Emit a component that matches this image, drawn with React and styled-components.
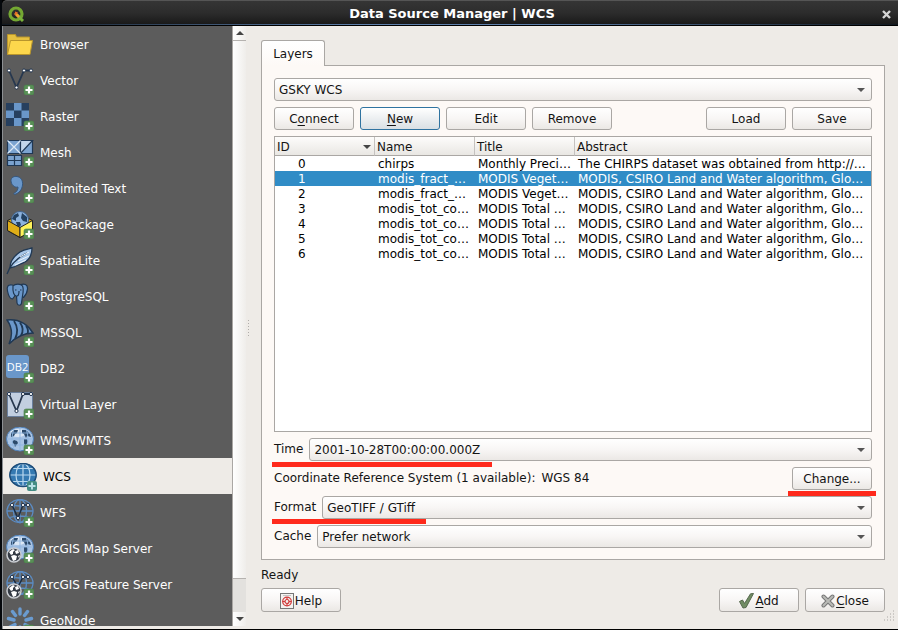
import React, { useState } from 'react';
import styled, { createGlobalStyle, css } from 'styled-components';

const GlobalStyle = createGlobalStyle`
  * { box-sizing: border-box; }
  body {
    margin: 0;
    background: #000;
    color: #141414;
    font: 12px/15px "DejaVu Sans", sans-serif;
  }
  button, select { font: inherit; color: inherit; margin: 0; }
`;

const Window = styled.div`
  height: 100vh;
  min-height: 400px;
  display: flex;
  flex-direction: column;
  overflow: hidden;
  border-left: 2px solid #05080c;
  border-bottom: 1px solid #000;
`;

const TitleBar = styled.header`
  flex: none;
  height: 26px;
  display: flex;
  align-items: center;
  padding: 2px 4px 0 6px;
  border-top: 1px solid #555;
  border-bottom: 1px solid #000;
  border-top-left-radius: 5px;
  background:
    linear-gradient(90deg, #101820, #5e80ac 40%, #5e80ac 60%, #101820) bottom / 100% 1px no-repeat,
    linear-gradient(#353535, #2c2c2c 50%, #181818);
`;

const Title = styled.h1`
  flex: 1;
  margin: 0;
  color: #fff;
  font-size: 13px;
  line-height: 20px;
  font-weight: bold;
  text-align: center;
`;

const TitleClose = styled.button`
  display: flex;
  padding: 3px;
  border: 0;
  background: none;
`;

const Body = styled.div`
  flex: 1;
  min-height: 0;
  display: flex;
  background: #eeebe7;
  border-left: 1px solid #8c9094;
`;

const Sidebar = styled.nav`
  flex: none;
  width: 243px;
  display: flex;
  margin-bottom: 3px;
`;

const SourceList = styled.div`
  flex: 1;
  overflow: hidden;
  background: #5c5c5c;
`;

const SourceItem = styled.button`
  width: 100%;
  height: 36px;
  display: flex;
  align-items: center;
  gap: 6px;
  border: 0;
  padding: 2px 3px 0;
  text-align: left;
  color: #fff;
  background: transparent;
  ${(p) => p.$active && css`
    padding-left: 6px;
    color: #000;
    background: #eeebe7;
  `}
`;

const SourceIcon = styled.svg`
  flex: none;
  width: 28px;
  height: 28px;
`;

const ScrollBar = styled.div`
  width: 14px;
  display: flex;
  flex-direction: column;
  border-left: 1px solid #aaa7a4;
  background: #e3e1de;
`;

const ScrollButton = styled.button`
  height: 14px;
  display: flex;
  align-items: center;
  justify-content: center;
  padding: 0;
  border: 0;
  background: linear-gradient(90deg, #fff, #efedea);
`;

const ScrollThumb = styled.div`
  flex: 1;
  margin-bottom: 33px;
  border: solid #b5b2af;
  border-width: 1px 0;
  background: linear-gradient(90deg, #fff, #efedea);
`;

const Splitter = styled.div`
  flex: none;
  width: 15px;
  display: flex;
  align-items: center;
  padding-left: 1px;
`;

const Main = styled.main`
  flex: 1;
  min-width: 0;
  display: flex;
  flex-direction: column;
  padding: 14px 13px 0 0;
`;

const Tab = styled.button`
  position: relative;
  align-self: flex-start;
  width: 64px;
  height: 26px;
  margin-bottom: -1px;
  padding: 2px 0 0;
  border: 1px solid #aaa7a4;
  border-bottom: 0;
  border-radius: 3px 3px 0 0;
  background: linear-gradient(#fff, #fdf9f6);
`;

const Panel = styled.section`
  flex: 1;
  min-height: 0;
  display: flex;
  flex-direction: column;
  gap: 6px;
  padding: 12px 12px 11px;
  border: 1px solid #aaa7a4;
  background: #fdf9f6;
`;

const Row = styled.div`
  flex: none;
  position: relative;
  display: flex;
  align-items: center;
  gap: 6px;
`;

const Spacer = styled.div`
  flex: 1;
`;

const raised = css`
  border: 1px solid #aaa7a4;
  border-radius: 3px;
  background: linear-gradient(#fff, #f8f6f5 50%, #ebe8e5);
`;

const Button = styled.button`
  ${raised}
  flex: none;
  width: 80px;
  height: ${(p) => (p.$tall ? 24 : 23)}px;
  display: flex;
  align-items: center;
  justify-content: center;
  gap: 1px;
  padding: 2px 0 0;
  ${(p) => p.$focused && css`
    border-color: #2f73a0;
    background: linear-gradient(#fff, #eceff1 50%, #d9e0e4);
  `}
`;

const Mnemonic = styled.span`
  text-decoration: underline;
  text-decoration-thickness: 1px;
  text-underline-offset: 2px;
  text-decoration-skip-ink: none;
`;

const ComboFrame = styled.span`
  flex: 1;
  position: relative;
  display: flex;
`;

const ComboSelect = styled.select`
  ${raised}
  appearance: none;
  width: 100%;
  height: 23px;
  padding: 2px 20px 0 4px;
`;

const ComboArrow = styled.svg`
  position: absolute;
  right: 7px;
  top: 10px;
  pointer-events: none;
`;

const Marker = styled.span`
  position: absolute;
  z-index: 1;
  top: ${(p) => p.$top}px;
  left: ${(p) => (p.$end ? 'auto' : '-2px')};
  right: ${(p) => (p.$end ? '-4px' : 'auto')};
  width: ${(p) => p.$width}px;
  height: 5px;
  background: #ff2a1c;
`;

const TreeBox = styled.div`
  flex: 1;
  min-height: 0;
  overflow: hidden;
  border: 1px solid #aaa7a4;
  background: #fff;
`;

const Tree = styled.table`
  width: 100%;
  table-layout: fixed;
  border-collapse: separate;
  border-spacing: 0;
`;

const HeadCell = styled.th`
  width: ${(p) => (p.$wide ? 'auto' : '100px')};
  height: 19px;
  padding: 2px 3px 0 2px;
  border-right: ${(p) => (p.$wide ? '0' : '1px solid #c5c2bf')};
  border-bottom: 1px solid #aaa7a4;
  background: linear-gradient(#fdfcfb, #e9e7e3);
  text-align: left;
  font-weight: normal;
`;

const HeadInner = styled.div`
  display: flex;
  align-items: center;
  justify-content: space-between;
`;

const TreeRow = styled.tr`
  color: ${(p) => (p.$selected ? '#fff' : '#000')};
  background: ${(p) => (p.$selected ? '#308cc6' : '#fff')};
`;

const Cell = styled.td`
  height: 15px;
  line-height: 13px;
  padding: 2px 3px 0 ${(p) => (p.$id ? 23 : 3)}px;
  overflow: hidden;
  white-space: nowrap;
  text-overflow: ellipsis;
`;

const Status = styled.div`
  flex: none;
  margin: 8px 0 5px;
`;

const Footer = styled.footer`
  flex: none;
  position: relative;
  display: flex;
  gap: 6px;
  padding-bottom: 17px;
`;

const Grip = styled.svg`
  position: absolute;
  right: -10px;
  bottom: 7px;
`;

const Triangle = ({ up }) => (
  <svg width="8" height="4" viewBox="0 0 8 4" aria-hidden="true">
    <path d={up ? 'M0 4L4 0L8 4Z' : 'M0 0H8L4 4Z'} fill="#444" />
  </svg>
);

const Plus = () => (
  <g>
    <rect x="18" y="18" width="10" height="10" rx="2" fill="#589056" stroke="#4a7d49" strokeWidth=".6" />
    <path d="M23 19.5v7M19.5 23h7" stroke="#fff" strokeWidth="2.2" />
  </g>
);

const GridLines = ({ stroke = '#5b8cc4' }) => (
  <g fill="none" stroke={stroke} strokeWidth="1.3">
    <ellipse cx="14" cy="12" rx="13" ry="11.5" />
    <ellipse cx="14" cy="12" rx="6.5" ry="11.5" />
    <path d="M14 .5v23M1 12h26M3.5 5.5q10.500 3 21 0M3.500 18.500q10.500-3 21 0" />
  </g>
);

const Continents = () => (
  <path
    d="M5 6l3-3 4 0-1 3-2 1-1 2-3 1zM8 13l3 1 1 2-3 4-1-3-2-2zM16 3l4 0 4 4 1 3-4-1-1 2-2-4-2-1zM18 12l3 0 1 3-3 4-1-3z"
    fill="#2c4a6b"
  />
);

const Globe = () => (
  <g>
    <ellipse cx="14" cy="12" rx="13.500" ry="12" fill="#a9c4e4" stroke="#4f80b8" />
    <ellipse cx="12" cy="6" rx="8" ry="4" fill="#dce8f5" />
    <Continents />
    <path d="M14 .5v23M1 12h26M3.500 6h21M3.500 18h21M8 2q-4 10 0 20M20 2q4 10 0 20" fill="none" stroke="#8fb6e0" strokeWidth=".9" />
  </g>
);

const ArcBadge = () => (
  <g>
    <circle cx="8" cy="20" r="7" fill="#333a44" stroke="#c9ccd1" strokeWidth="1.500" />
    <path d="M3 17l4-3 2 1-2 2 0 2-2 1zM9 16l3-1 1 3-3 1zM5 21l3-1 3 1-1 4-3 1zM12 21l2-1-1 3z" fill="#fff" />
  </g>
);

const Nodes = ({ points, fill = '#fff' }) =>
  points.map(([x, y]) => (
    <circle key={`${x}-${y}`} cx={x} cy={y} r="1.600" fill={fill} stroke="#24364f" strokeWidth="1" />
  ));

const drawings = {
  browser: (
    <g stroke="#b8952c" strokeLinejoin="round">
      <path d="M1.500 23V3.500h8l1 2.500h13V22z" fill="#e6c040" />
      <path d="M1.500 23.500L4.500 9.500h22L24 23.500z" fill="#fdd74c" />
    </g>
  ),
  vector: (
    <g>
      <path d="M3 3.500l7.500 17L18 3.500h7" fill="none" stroke="#27384f" strokeWidth="1.800" />
      <Nodes points={[[3, 3.5], [10.5, 20.5], [18, 3.5], [25, 3.5]]} />
      <Plus />
    </g>
  ),
  raster: (
    <g>
      <path d="M0 0h23v23H0z" fill="#27405f" />
      <path d="M8 0h7.500v7.500H8zM0 7.500h8V15H0zM15.500 7.500H23V15h-7.500zM8 15h7.500v8H8z" fill="#6a97ca" />
      <Plus />
    </g>
  ),
  mesh: (
    <g>
      <g stroke="#1f3855" strokeWidth="1.200">
        <path d="M1.500 1.500h13v13h-13zM14.500 1.500h12v13h-12zM1.500 16.500h7v5h-7zM8.500 16.500h7v5h-7zM1.500 21.500h7v5h-7zM8.500 21.500h7v5h-7z" fill="#7ba3d0" />
        <path d="M14.500 14.500v-13h12z" fill="#c3d6eb" />
        <path d="M1.500 1.500l13 13M14.500 1.500l-13 13" stroke="#dce8f5" />
      </g>
      <Plus />
    </g>
  ),
  comma: (
    <g>
      <path d="M5 5.500c0-3 3-4.500 6-4 4 .8 6 4 5.500 8.500-.5 4.500-3 8-8 9.500l-.8-1c3-1.500 4.500-4 4.300-6.500-3.500 1-7-2.500-7-6.500z" fill="#6a97ca" stroke="#35577e" />
      <Plus />
    </g>
  ),
  geopackage: (
    <g>
      <path d="M1.500 9.500l12.500-6 12.500 6v10L14 26.500l-12.500-7z" fill="#d9a514" stroke="#222" />
      <circle cx="14" cy="9" r="8.500" fill="#8db3de" stroke="#40638d" />
      <path d="M8 4l4-2 1 3-3 2 0 3-4-2zM16 2l5 4 0 5-4-1-2-3zM10 11l4 0 1 3-3 3z" fill="#23405f" />
      <path d="M1.500 9.500L14 16.500v10l-12.500-7z" fill="#dfae18" stroke="#222" strokeLinejoin="round" />
      <path d="M26.500 9.500L14 16.500v10l12.500-7z" fill="#fff35a" stroke="#222" strokeLinejoin="round" />
      <Plus />
    </g>
  ),
  feather: (
    <g>
      <path d="M4 21c0-6 4-12 10-16 4-2.500 8-3 12-4 0 6-2 11-7 14-4 2-7 3-11 5z" fill="#a9c8ea" stroke="#203853" strokeWidth="1.300" />
      <path d="M1 27c3-9 10-16 20-21" fill="none" stroke="#203853" strokeWidth="1.300" />
      <path d="M9 18l11-5M12 14l11-5M14 10l9-5" stroke="#e9f2fb" />
      <Plus />
    </g>
  ),
  elephant: (
    <g>
      <g fill="#6a97ca" stroke="#203853" strokeWidth="1.200" strokeLinejoin="round">
        <path d="M6 2C2 1 .500 4 1.500 8c.8 4 2.500 8 5 8l3-4V3z" />
        <path d="M14 2c4-2 8-.500 7.500 4-.4 4-2.500 7-4 8.500l-3-2z" />
        <path d="M7 3c2-2.500 8-2.500 9.500 0 1.500 3 .500 7 0 10l-1 7c-.4 3-4 3-4.500 0l-.500-7C8 13 6.500 9 7 3z" />
        <path d="M9 7h1.500M14 7h1.500M11 13c2 0 2-3 2-5" fill="none" />
      </g>
      <Plus />
    </g>
  ),
  mssql: (
    <g>
      <path d="M1 1c9-1 19 2 26 13-9 0-16 3-24 11C7 16 6 8 1 1z" fill="#6a97ca" stroke="#203853" strokeWidth="1.400" />
      <path d="M8 2c4 6 4 12 1 18M14 3.500c3.500 5 3.500 9 1 13M20 7c2.500 3 2.500 5 1.500 8" fill="none" stroke="#203853" strokeWidth="1.800" />
      <Plus />
    </g>
  ),
  db2: (
    <g>
      <rect width="23" height="23" rx="3" fill="#6a97ca" />
      <text x="11.500" y="16" textAnchor="middle" fontSize="11" fontFamily="Open Sans, sans-serif" fill="#fff">DB2</text>
      <Plus />
    </g>
  ),
  virtual: (
    <g>
      <path d="M1.500 1.500h25v24h-25z" fill="#c2cfe0" stroke="#6a7f9c" />
      <path d="M3 3l7.500 17L17 3h8" fill="none" stroke="#27384f" strokeWidth="1.800" />
      <Nodes points={[[3, 3], [10.5, 20], [17, 3], [25, 3]]} />
      <Plus />
    </g>
  ),
  wms: <g><Globe /><Plus /></g>,
  wcs: (
    <g>
      <ellipse cx="14" cy="12" rx="13.500" ry="12" fill="#3579b1" />
      <g fill="none" stroke="#b9d8ef" strokeWidth="1.200">
        <ellipse cx="14" cy="12" rx="7" ry="11.500" />
        <path d="M14 .5v23M1 12h26M4 5.500h20M4 18.500h20" />
      </g>
      <ellipse cx="14" cy="12" rx="13.200" ry="11.500" fill="none" stroke="#1f4d79" strokeWidth="1.500" />
      <rect x="18" y="18" width="10" height="10" rx="2" fill="#448c83" />
      <path d="M23 19.500v7M19.500 23h7" stroke="#b8e0e6" strokeWidth="2" />
    </g>
  ),
  wfs: (
    <g>
      <GridLines />
      <path d="M6 6l6 13L17 6h5" fill="none" stroke="#1d2d42" strokeWidth="1.500" />
      <Nodes points={[[6, 6], [12, 19], [17, 6], [22, 6]]} />
      <Plus />
    </g>
  ),
  arcmap: <g><Globe /><ArcBadge /><Plus /></g>,
  arcfeature: (
    <g>
      <GridLines />
      <path d="M6 6l6 10L17 6h5" fill="none" stroke="#1d2d42" strokeWidth="1.500" />
      <Nodes points={[[6, 6], [17, 6], [22, 6]]} />
      <ArcBadge />
      <Plus />
    </g>
  ),
  geonode: (
    <g>
      <path d="M14 2v5M14 20v5M2.500 11.500l5.500 1.500M25.500 11.500L20 13M6.500 4.500l3 4M21.500 4.500l-3 4M4 20l5-2.500M24 20l-5-2.500" stroke="#6a9bd0" strokeWidth="3.400" strokeLinecap="round" />
      <Plus />
    </g>
  ),
};

const sources = [
  ['browser', 'Browser'],
  ['vector', 'Vector'],
  ['raster', 'Raster'],
  ['mesh', 'Mesh'],
  ['comma', 'Delimited Text'],
  ['geopackage', 'GeoPackage'],
  ['feather', 'SpatiaLite'],
  ['elephant', 'PostgreSQL'],
  ['mssql', 'MSSQL'],
  ['db2', 'DB2'],
  ['virtual', 'Virtual Layer'],
  ['wms', 'WMS/WMTS'],
  ['wcs', 'WCS'],
  ['wfs', 'WFS'],
  ['arcmap', 'ArcGIS Map Server'],
  ['arcfeature', 'ArcGIS Feature Server'],
  ['geonode', 'GeoNode'],
];

const modis = 'MODIS, CSIRO Land and Water algorithm, Global';
const layers = [
  ['chirps', 'Monthly Precipitation', 'The CHIRPS dataset was obtained from http://chg'],
  ['modis_fract_cover', 'MODIS Vegetation', modis],
  ['modis_fract_cover', 'MODIS Vegetation', modis],
  ['modis_tot_cover', 'MODIS Total Cover', modis],
  ['modis_tot_cover', 'MODIS Total Cover', modis],
  ['modis_tot_cover', 'MODIS Total Cover', modis],
  ['modis_tot_cover', 'MODIS Total Cover', modis],
];

function Combo({ id, value, label }) {
  return (
    <ComboFrame>
      <ComboSelect id={id} aria-label={label} defaultValue={value}>
        <option>{value}</option>
      </ComboSelect>
      <ComboArrow width="8" height="4" viewBox="0 0 8 4" aria-hidden="true">
        <path d="M0 0H8L4 4Z" fill="#555" />
      </ComboArrow>
    </ComboFrame>
  );
}

const QgisLogo = () => (
  <svg width="17" height="16" viewBox="0 0 17 16" aria-hidden="true">
    <circle cx="8" cy="8" r="6" fill="none" stroke="#74a832" strokeWidth="3.200" />
    <path d="M8.500 8.500l6.500 6.500" stroke="#79b23a" strokeWidth="3" />
    <path d="M7 7l4 4" stroke="#f0a030" strokeWidth="2.600" />
    <path d="M7 5.500l3 1-3 3z" fill="#e66a24" />
  </svg>
);

const HelpIcon = () => (
  <svg width="14" height="16" viewBox="0 0 14 16" aria-hidden="true">
    <rect x=".5" y=".5" width="13" height="15" fill="#f4f3f1" stroke="#777" />
    <path d="M3 2.500h8" stroke="#c4c4c4" />
    <circle cx="7" cy="8.500" r="4.300" fill="none" stroke="#d23a3a" strokeWidth="1.200" />
    <circle cx="7" cy="8.500" r="2" fill="none" stroke="#d23a3a" strokeWidth="1.200" />
    <path d="M7 4v2.500M7 10.500V13M2.500 8.500H5M9 8.500h2.500" stroke="#d23a3a" strokeWidth="1.200" />
  </svg>
);

const CheckIcon = () => (
  <svg width="15" height="16" viewBox="0 0 15 16" aria-hidden="true">
    <path d="M.5 8.500l3-1.500 2 3.500L11.500.800l3-.3L7 14.500l-3 .5z" fill="#718d64" stroke="#56694d" strokeLinejoin="round" />
  </svg>
);

const CrossIcon = () => (
  <svg width="14" height="14" viewBox="0 0 14 14" aria-hidden="true">
    <path d="M2.500 2.500l9 9M11.500 2.500l-9 9" stroke="#777" strokeWidth="4" strokeLinecap="round" />
    <path d="M2.500 2.500l9 9M11.500 2.500l-9 9" stroke="#b9bab6" strokeWidth="2" strokeLinecap="round" />
  </svg>
);

export default function App() {
  const [active, setActive] = useState('wcs');
  const [selected, setSelected] = useState(1);

  return (
    <>
      <GlobalStyle />
      <Window>
        <TitleBar>
          <QgisLogo />
          <Title>Data Source Manager | WCS</Title>
          <TitleClose aria-label="Close window">
            <svg width="9" height="9" viewBox="0 0 9 9">
              <path d="M1 1l7 7M8 1L1 8" stroke="#d5d5d5" strokeWidth="2.400" />
            </svg>
          </TitleClose>
        </TitleBar>
        <Body>
          <Sidebar>
            <SourceList>
              {sources.map(([key, name]) => (
                <SourceItem key={key} $active={active === key} onClick={() => setActive(key)}>
                  <SourceIcon viewBox="0 0 28 28" aria-hidden="true">{drawings[key]}</SourceIcon>
                  {name}
                </SourceItem>
              ))}
            </SourceList>
            <ScrollBar>
              <ScrollButton aria-label="Scroll up"><Triangle up /></ScrollButton>
              <ScrollThumb />
              <ScrollButton aria-label="Scroll down"><Triangle /></ScrollButton>
            </ScrollBar>
          </Sidebar>
          <Splitter>
            <svg width="3" height="18" aria-hidden="true">
              <path d="M1.500 1v16" stroke="#b0adaa" strokeDasharray="1 2" />
            </svg>
          </Splitter>
          <Main>
            <Tab>Layers</Tab>
            <Panel>
              <Row><Combo label="Connection" value="GSKY WCS" /></Row>
              <Row>
                <Button><span>C<Mnemonic>o</Mnemonic>nnect</span></Button>
                <Button $focused><span><Mnemonic>N</Mnemonic>ew</span></Button>
                <Button>Edit</Button>
                <Button>Remove</Button>
                <Spacer />
                <Button>Load</Button>
                <Button>Save</Button>
              </Row>
              <TreeBox>
                <Tree>
                  <thead>
                    <tr>
                      <HeadCell><HeadInner>ID<Triangle /></HeadInner></HeadCell>
                      <HeadCell>Name</HeadCell>
                      <HeadCell>Title</HeadCell>
                      <HeadCell $wide>Abstract</HeadCell>
                    </tr>
                  </thead>
                  <tbody>
                    {layers.map(([name, title, abstract], i) => (
                      <TreeRow key={i} $selected={selected === i} onClick={() => setSelected(i)}>
                        <Cell $id>{i}</Cell>
                        <Cell>{name}</Cell>
                        <Cell>{title}</Cell>
                        <Cell>{abstract}</Cell>
                      </TreeRow>
                    ))}
                  </tbody>
                </Tree>
              </TreeBox>
              <Row>
                <label htmlFor="time">Time</label>
                <Combo id="time" value="2001-10-28T00:00:00.000Z" />
                <Marker $top={24} $width={220} />
              </Row>
              <Row>
                <span>Coordinate Reference System (1 available):</span>
                <span>WGS 84</span>
                <Spacer />
                <Button>Change...</Button>
                <Marker $top={24} $width={88} $end />
              </Row>
              <Row>
                <label htmlFor="format">Format</label>
                <Combo id="format" value="GeoTIFF / GTiff" />
                <Marker $top={23} $width={154} />
              </Row>
              <Row>
                <label htmlFor="cache">Cache</label>
                <Combo id="cache" value="Prefer network" />
              </Row>
            </Panel>
            <Status>Ready</Status>
            <Footer>
              <Button $tall><HelpIcon /><span>Help</span></Button>
              <Spacer />
              <Button $tall><CheckIcon /><span><Mnemonic>A</Mnemonic>dd</span></Button>
              <Button $tall><CrossIcon /><span><Mnemonic>C</Mnemonic>lose</span></Button>
              <Grip width="12" height="12" viewBox="0 0 12 12" aria-hidden="true">
                <path d="M10 1h1M7 4h1M10 4h1M4 7h1M7 7h1M10 7h1M1 10h1M4 10h1M7 10h1M10 10h1" stroke="#aaa7a4" />
              </Grip>
            </Footer>
          </Main>
        </Body>
      </Window>
    </>
  );
}
